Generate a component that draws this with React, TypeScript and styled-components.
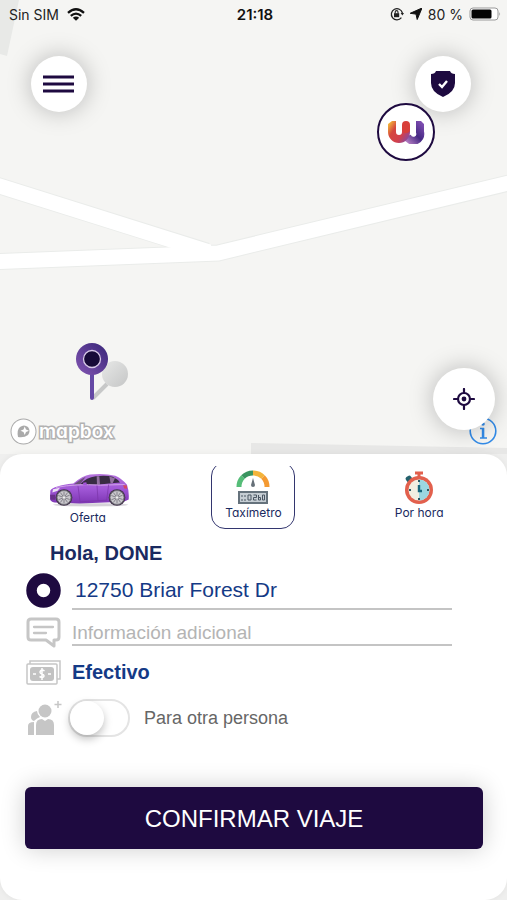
import React, { useState } from "react";
import styled, { createGlobalStyle } from "styled-components";

const ink = "#1e0a40";
const navy = "#1a2a60";
const blue = "#143a86";
const line = "#c4c4c4";

const GlobalStyle = createGlobalStyle`
  *, *::before, *::after { box-sizing: border-box; }
  body { margin: 0; background: #efefee; font-family: "Liberation Sans", Arial, sans-serif; }
  button, input { font: inherit; }
  svg { display: block; }
`;

const Screen = styled.div`
  display: flex;
  flex-direction: column;
  min-height: 100vh;
`;

const MapArea = styled.main`
  position: relative;
  display: flex;
  flex: 1;
  flex-direction: column;
  min-height: 454px;
  background: #f5f5f3;
`;

const MapDrawing = styled.svg`
  position: absolute;
  inset: 0;
  width: 100%;
  height: 100%;
`;

const StatusBar = styled.header`
  position: relative;
  display: grid;
  grid-template-columns: 1fr auto 1fr;
  align-items: center;
  height: 28px;
  padding: 0 6px 0 9px;
  color: #222;
  font-family: Inter, sans-serif;
  font-size: 14px;
`;

const StatusGroup = styled.div<{ $end?: boolean }>`
  display: flex;
  align-items: center;
  justify-content: ${(p) => (p.$end ? "flex-end" : "flex-start")};
  gap: ${(p) => (p.$end ? "6px" : "8px")};
`;

const Clock = styled.time`
  color: #111;
  font-size: 15px;
  font-weight: 600;
`;

const MapControls = styled.div`
  position: relative;
  display: flex;
  justify-content: space-between;
  padding: 28px 36px 0 31px;
`;

const RoundButton = styled.button<{ $large?: boolean }>`
  display: grid;
  place-items: center;
  width: ${(p) => (p.$large ? 62 : 56)}px;
  height: ${(p) => (p.$large ? 62 : 56)}px;
  padding: 0;
  border: 0;
  border-radius: 50%;
  background: #fff;
  box-shadow: 0 0 24px rgba(0, 0, 0, 0.25);
`;

const BrandMarker = styled.div`
  position: absolute;
  top: 103px;
  right: 72px;
  display: grid;
  place-items: center;
  width: 58px;
  height: 58px;
  border: 2px solid ${ink};
  border-radius: 50%;
  background: #fff;
`;

const PinMarker = styled.svg`
  position: absolute;
  left: 75px;
  bottom: 52px;
`;

const MapFooter = styled.div`
  position: relative;
  display: flex;
  align-items: flex-end;
  justify-content: space-between;
  margin-top: auto;
  padding: 0 10px 9px;
`;

const MapboxLink = styled.a`
  display: flex;
  align-items: center;
  gap: 2px;
  color: #fff;
  font-family: Inter, sans-serif;
  font-feature-settings: "cv11";
  font-size: 19px;
  font-weight: 600;
  line-height: 26px;
  text-decoration: none;
  -webkit-text-stroke: 3px #b2b2b2;
  paint-order: stroke fill;
`;

const Locator = styled.div`
  position: relative;
  display: flex;
`;

const InfoButton = styled.button`
  padding: 0;
  border: 0;
  background: none;
`;

const LocateSlot = styled.div`
  position: absolute;
  right: 2px;
  bottom: 15px;
`;

const Panel = styled.section`
  position: relative;
  padding: 12px 0 51px;
  border-radius: 22px;
  background: #fff;
  box-shadow: 0 0 6px rgba(0, 0, 0, 0.06);
`;

const Tabs = styled.div`
  display: grid;
  grid-template-columns: repeat(3, 1fr);
  justify-items: center;
  overflow: hidden;
  height: 63px;
  padding: 0 5px;
`;

const Tab = styled.button<{ $selected: boolean }>`
  position: relative;
  display: flex;
  flex-direction: column;
  align-items: center;
  width: 84px;
  height: 63px;
  padding: 4px 0 0;
  border: 0;
  background: none;
  color: ${navy};
  font-family: Inter, sans-serif;
  font-feature-settings: "cv11";
  font-size: 12px;
  line-height: 16px;

  &::before {
    content: "";
    position: absolute;
    inset: -4px 0 0;
    border: 1px solid ${(p) => (p.$selected ? "#33366f" : "transparent")};
    border-radius: 14px;
  }
`;

const TabPicture = styled.span<{ $tall?: boolean }>`
  display: grid;
  flex: none;
  place-items: center;
  height: ${(p) => (p.$tall ? 40 : 35)}px;
`;

const Form = styled.form`
  display: flex;
  flex-direction: column;
`;

const Greeting = styled.h1`
  margin: 12px 0 2px 50px;
  color: ${navy};
  font-size: 20px;
  line-height: 24px;
`;

const Row = styled.div<{ $height: number }>`
  display: grid;
  grid-template-columns: 36px 1fr;
  align-items: center;
  column-gap: 10px;
  height: ${(p) => p.$height}px;
  padding: 0 55px 0 26px;
`;

const TextField = styled.input<{ $strong?: boolean }>`
  width: 100%;
  height: ${(p) => (p.$strong ? 40 : 28)}px;
  padding: ${(p) => (p.$strong ? "2px 0 0 3px" : "4px 0 0")};
  border: 0;
  border-bottom: 2px solid ${line};
  outline: 0;
  background: none;
  color: ${blue};
  font-size: ${(p) => (p.$strong ? 21 : 19)}px;

  &::placeholder { color: #b4b4b4; }
`;

const PaymentButton = styled.button`
  justify-self: start;
  padding: 0;
  border: 0;
  background: none;
  color: ${blue};
  font-size: 20px;
  font-weight: 700;
`;

const SwitchLabel = styled.label`
  display: flex;
  align-items: center;
  gap: 14px;
  margin-left: -4px;
  color: #666;
  font-size: 18px;
`;

const Switch = styled.input`
  position: relative;
  width: 62px;
  height: 38px;
  margin: 0;
  border: 2px solid #e4e4e4;
  border-radius: 19px;
  appearance: none;
  background: #fff;

  &::before {
    content: "";
    position: absolute;
    top: 0;
    left: 0;
    width: 34px;
    height: 34px;
    border-radius: 50%;
    background: #fff;
    box-shadow: 0 4px 8px rgba(0, 0, 0, 0.25);
  }

  &:checked { background: ${ink}; }
  &:checked::before { left: 24px; }
`;

const ConfirmButton = styled.button`
  height: 62px;
  margin: 44px 24px 0 25px;
  padding: 2px 0 0;
  border: 0;
  border-radius: 6px;
  background: ${ink};
  box-shadow: 0 0 24px rgba(0, 0, 0, 0.2);
  color: #fff;
  font-size: 24px;
`;

const Streets = () => (
  <MapDrawing viewBox="0 0 507 454" preserveAspectRatio="xMidYMid slice" aria-hidden="true">
    <path d="M0 0H19L7 56L0 54Z" fill="#e8e9e7" />
    <path d="M251 443L507 448V454H251Z" fill="#e7e7e6" />
    <g fill="none" strokeLinejoin="miter">
      <g stroke="#eaecea" strokeWidth="17">
        <path d="M-10 183L207 251" />
        <path d="M-10 262L218 253L517 181" />
      </g>
      <g stroke="#fff" strokeWidth="15">
        <path d="M-10 183L209 252" />
        <path d="M-10 262L218 253L517 181" />
      </g>
    </g>
  </MapDrawing>
);

const WifiIcon = () => (
  <svg width="18" height="13" viewBox="0 0 18 13" fill="none" stroke="#111" strokeWidth="2.3" aria-hidden="true">
    <path d="M1 4.8Q9-2.2 17 4.8" />
    <path d="M3.8 7.8Q9 3.4 14.2 7.8" />
    <path d="M9 12.8L5.8 9.7Q9 7.2 12.2 9.7Z" fill="#111" stroke="none" />
  </svg>
);

const LockIcon = () => (
  <svg width="14" height="14" viewBox="0 0 14 14" fill="none" stroke="#222" aria-hidden="true">
    <path d="M11.4 10.7A5.6 5.6 0 1 1 12.4 6" strokeWidth="1.3" />
    <path d="M10.6 6H14L12.4 8.6Z" fill="#222" stroke="none" />
    <rect x="4" y="6.2" width="5.2" height="4" fill="#222" stroke="none" />
    <path d="M5.2 6.5V5A1.4 1.4 0 0 1 8 5V6.5" strokeWidth="1.1" />
  </svg>
);

const ArrowIcon = () => (
  <svg width="12" height="12" viewBox="0 0 12 12" fill="#111" aria-hidden="true">
    <path d="M12 0L7.2 11.5L6 6.1L.2 5.3Z" stroke="#111" strokeLinejoin="round" />
  </svg>
);

const BatteryIcon = () => (
  <svg width="32" height="14" viewBox="0 0 32 14" aria-hidden="true">
    <rect x="1" y="1" width="28" height="12" rx="3" fill="#fff" stroke="#999" />
    <rect x="2.5" y="2.5" width="20" height="9" rx="1.5" fill="#050505" />
    <path d="M30.3 5Q32 7 30.3 9Z" fill="#999" />
  </svg>
);

const MenuIcon = () => (
  <svg width="32" height="20" viewBox="0 0 32 20" stroke={ink} strokeWidth="3" aria-hidden="true">
    <path d="M0 3H31M0 10H31M0 17H31" />
  </svg>
);

const ShieldIcon = () => (
  <svg width="26" height="28" viewBox="0 0 26 28" aria-hidden="true">
    <path d="M6 1H20Q21 4 25 4V13Q25 22 13 27Q1 22 1 13V4Q5 4 6 1Z" fill={ink} />
    <path d="M9 14L12 17L17 11" fill="none" stroke="#fff" strokeWidth="2.4" />
  </svg>
);

const BrandIcon = () => (
  <svg width="38" height="24" viewBox="0 0 38 24" fill="none" strokeWidth="8" aria-hidden="true">
    <defs>
      <linearGradient id="brandWarm" gradientUnits="userSpaceOnUse" x1="1" y1="4" x2="23" y2="19">
        <stop offset="0" stopColor="#f5bc3a" />
        <stop offset=".3" stopColor="#d5473e" />
        <stop offset=".65" stopColor="#d2404c" />
        <stop offset="1" stopColor="#7d4aac" />
      </linearGradient>
      <linearGradient id="brandCool" gradientUnits="userSpaceOnUse" x1="18" y1="20" x2="36" y2="2">
        <stop offset="0" stopColor="#b07bc0" />
        <stop offset=".45" stopColor="#452883" />
        <stop offset="1" stopColor="#8552b6" />
      </linearGradient>
    </defs>
    <path d="M33 1V12A6.500 6.500 0 0 1 20 16" stroke="url(#brandCool)" />
    <path d="M5 1V12A7 7 0 0 0 19 12V5" stroke="url(#brandWarm)" />
    <path d="M19 9V4.9" stroke="#d83f3a" strokeLinecap="round" />
    <path d="M1 1H5L1 4ZM37 1H34L37 4Z" fill="#fff" stroke="none" />
  </svg>
);

const LocationPin = () => (
  <PinMarker width="56" height="60" viewBox="0 0 56 60" aria-hidden="true">
    <defs>
      <linearGradient id="pinFill" x1="0" y1="1" x2="1" y2="0">
        <stop stopColor="#8356b3" />
        <stop offset="1" stopColor="#382578" />
      </linearGradient>
      <linearGradient id="pinShade" x1="0" y1="0" x2="1" y2="1">
        <stop stopColor="#e7e8e7" />
        <stop offset="1" stopColor="#c5c6c6" />
      </linearGradient>
    </defs>
    <path d="M18 56L32 42" stroke="#c7c8c8" strokeWidth="4" />
    <circle cx="40" cy="32" r="13" fill="url(#pinShade)" />
    <path d="M17 30V56" stroke="#6549a5" strokeWidth="4" strokeLinecap="round" />
    <circle cx="17" cy="17" r="16" fill="url(#pinFill)" />
    <circle cx="17" cy="17" r="8.5" fill="#170a38" stroke="#d8c9e8" strokeWidth="1.3" />
  </PinMarker>
);

const MapboxIcon = () => (
  <svg width="27" height="27" viewBox="0 0 27 27" aria-hidden="true">
    <circle cx="13.5" cy="13.5" r="12" fill="#fff" stroke="#a9a9a9" strokeWidth="2" />
    <path d="M8 19Q6.5 12 10 9Q14 6 18 9Q21 13 18 17Q14 20 8 19Z" fill="#aaa" />
    <path d="M14.7 8.5L16 11.5L19 12.8L16 14L14.7 17L13.5 14L10.5 12.8L13.5 11.5Z" fill="#fff" />
  </svg>
);

const InfoIcon = () => (
  <svg width="28" height="28" viewBox="0 0 28 28" fill="none" stroke="#328be8" aria-hidden="true">
    <circle cx="14" cy="14" r="12.8" strokeWidth="1.6" />
    <circle cx="14" cy="7" r="1.8" fill="#328be8" stroke="none" />
    <path d="M11 11.5H14.5V21M11 21H18" strokeWidth="1.3" />
    <path d="M14 11V21" strokeWidth="2.4" />
  </svg>
);

const LocateIcon = () => (
  <svg width="22" height="22" viewBox="0 0 22 22" fill="none" stroke={ink} strokeWidth="2.2" strokeLinecap="round" aria-hidden="true">
    <circle cx="11" cy="11" r="6" />
    <circle cx="11" cy="11" r="2.4" fill={ink} stroke="none" />
    <path d="M11 1V5M11 17V21M1 11H5M17 11H21" />
  </svg>
);

const Wheel = ({ x }: { x: number }) => (
  <g transform={`translate(${x} 133)`}>
    <circle r="25" fill="#403149" />
    <circle r="21" fill="#c9c7cc" stroke="#717078" strokeWidth="3" />
    <path d="M0-18V18M-17-6L17 6M-11 15L11-15M-17 7L17-7M-11-15L11 15" stroke="#85838b" strokeWidth="3" />
    <circle r="4" fill="#eee" />
  </g>
);

const CarIcon = () => (
  <svg width="82" height="35" viewBox="52 60 246 104" aria-hidden="true">
    <defs>
      <linearGradient id="carPaint" x1="0" y1="0" x2="0" y2="1">
        <stop stopColor="#b574dc" />
        <stop offset=".5" stopColor="#a158d7" />
        <stop offset="1" stopColor="#7d35b3" />
      </linearGradient>
    </defs>
    <ellipse cx="183" cy="155" rx="113" ry="5" fill="#d5d2d8" />
    <path d="M62 112Q71 98 131 91Q159 67 181 64Q223 59 257 68Q276 76 292 95Q299 115 297 139L282 146L150 151L75 148Q61 145 61 136Z" fill="url(#carPaint)" />
    <path d="M153 92Q170 73 198 69Q229 65 249 71Q265 79 271 88L238 91Q195 97 157 94Z" fill="#382c43" />
    <path d="M201 69H209L211 94L202 95ZM239 70L256 75L249 90L243 91Z" fill="#92719f" />
    <path d="M132 94Q149 81 168 71L151 94Z" fill="#6b5178" />
    <path d="M79 103Q139 91 213 96L285 94" fill="none" stroke="#d0a1e9" strokeWidth="3" />
    <path d="M145 99L151 146L231 141L237 94M202 97L205 142" fill="none" stroke="#7933a6" strokeWidth="2" />
    <path d="M70 108L91 104L84 113L68 118Z" fill="#eee2f5" />
    <path d="M61 125H77V140H63Z" fill="#69318a" />
    <path d="M280 96L292 97V107L284 106Z" fill="#d44863" />
    <path d="M160 89L170 87L172 96L161 96Z" fill="#a354d7" />
    <Wheel x={103} />
    <Wheel x={262} />
  </svg>
);

const MeterIcon = () => (
  <svg width="34" height="35" viewBox="0 0 34 35" aria-hidden="true">
    <g fill="none" strokeWidth="5">
      <path d="M3 17A14 14 0 0 1 7 7" stroke="#55bd78" />
      <path d="M7 7A14 14 0 0 1 17 3" stroke="#3a9460" />
      <path d="M17 3A14 14 0 0 1 27 7" stroke="#f3b43b" />
      <path d="M27 7A14 14 0 0 1 31 17" stroke="#f49a32" />
    </g>
    <path d="M17 8L19 15A2 2 0 0 1 15 15Z" fill="#667078" />
    <rect x="2" y="21" width="30" height="13" fill="#65727c" />
    <rect x="4" y="23" width="26" height="9" fill="#c6ced4" />
    <g fill="none" stroke="#4a5663">
      <path d="M6 25V27M6 29V31M9 25V27M9 29V31" />
      <path d="M12 25H15V30H12Z" />
      <path d="M17.500 25H20.500V27.500H17.500V30H20.500" />
      <path d="M22.500 25V30H24.500V27.500H22.500M26.500 25H28.500V30H26.500Z" />
    </g>
  </svg>
);

const StopwatchIcon = () => (
  <svg width="30" height="34" viewBox="0 0 30 34" aria-hidden="true">
    <path d="M11 2H19M15 2V6" stroke="#e2604d" strokeWidth="3" />
    <rect x="2" y="5" width="6" height="6" rx="2" fill="#24616d" transform="rotate(-35 5 8)" />
    <circle cx="15" cy="19" r="14" fill="#e2604d" />
    <circle cx="15" cy="19" r="10.5" fill="#f1eee2" />
    <path d="M15 8.500A10.500 10.500 0 0 1 15 29.500Z" fill="#9bd7e2" />
    <path d="M15 9V11M15 27V29M5 19H7M23 19H25" stroke="#2b5965" strokeWidth="2" />
    <path d="M15 14V20H18" fill="none" stroke="#17687d" strokeWidth="2.4" />
  </svg>
);

const OriginIcon = () => (
  <svg width="35" height="35" viewBox="0 0 35 35" aria-hidden="true">
    <circle cx="17.500" cy="17.500" r="12" fill="#fff" stroke={ink} strokeWidth="10.500" />
  </svg>
);

const NoteIcon = () => (
  <svg width="36" height="32" viewBox="0 0 36 32" fill="none" stroke="#c6c6c6" strokeWidth="3" strokeLinejoin="round" strokeLinecap="round" aria-hidden="true">
    <path d="M5 3H30Q33 3 33 6V21Q33 24 30 24H28V30L20 24H5Q2 24 2 21V6Q2 3 5 3Z" />
    <path d="M8 11H27M8 17H20" strokeWidth="2.300" />
  </svg>
);

const CashIcon = () => (
  <svg width="36" height="25" viewBox="0 0 36 25" fill="none" stroke="#c6c6c6" aria-hidden="true">
    <path d="M4 4V1H34V19H31" strokeWidth="1.500" />
    <rect x="1" y="4" width="30" height="20" rx="1" fill="#fff" strokeWidth="1.500" />
    <rect x="4" y="7" width="24" height="14" rx="3" fill="#c2c2c2" stroke="none" />
    <path d="M18.500 11Q16 9 14.500 11Q13 13 16 14Q19 15 17.500 17Q16 18 13.500 16.500M16 8V20M7 14H10M22 14H25" stroke="#fff" strokeWidth="1.500" />
  </svg>
);

const PeopleIcon = () => (
  <svg width="36" height="36" viewBox="0 0 36 36" fill="#c6c6c6" aria-hidden="true">
    <circle cx="19" cy="11" r="6.500" />
    <path d="M10 35V25Q10 19 16 19L19 21L22 19Q28 19 28 25V35Z" />
    <path d="M11 11Q5 12 5 17Q5 20 8 21Q11 18 14 17Q11 14 11 11Z" />
    <path d="M2 35V26Q2 22 8 22V35Z" />
    <path d="M32 1V8M28.500 4.500H35.500" stroke="#c6c6c6" strokeWidth="1.500" />
  </svg>
);

const services = [
  { id: "oferta", name: "Oferta", icon: <CarIcon />, tall: true },
  { id: "taximetro", name: "Taxímetro", icon: <MeterIcon />, tall: false },
  { id: "hora", name: "Por hora", icon: <StopwatchIcon />, tall: false },
];

export default function App() {
  const [service, setService] = useState("taximetro");
  const [address, setAddress] = useState("12750 Briar Forest Dr");

  return (
    <>
      <GlobalStyle />
      <Screen>
        <MapArea>
          <Streets />
          <StatusBar>
            <StatusGroup>
              <span>Sin SIM</span>
              <WifiIcon />
            </StatusGroup>
            <Clock>21:18</Clock>
            <StatusGroup $end>
              <LockIcon />
              <ArrowIcon />
              <span>80 %</span>
              <BatteryIcon />
            </StatusGroup>
          </StatusBar>
          <MapControls>
            <RoundButton aria-label="Menú"><MenuIcon /></RoundButton>
            <RoundButton aria-label="Seguridad"><ShieldIcon /></RoundButton>
          </MapControls>
          <BrandMarker><BrandIcon /></BrandMarker>
          <LocationPin />
          <MapFooter>
            <MapboxLink href="#mapbox"><MapboxIcon />mapbox</MapboxLink>
            <Locator>
              <InfoButton aria-label="Información del mapa"><InfoIcon /></InfoButton>
              <LocateSlot>
                <RoundButton $large aria-label="Mi ubicación"><LocateIcon /></RoundButton>
              </LocateSlot>
            </Locator>
          </MapFooter>
        </MapArea>
        <Panel>
          <Tabs role="tablist">
            {services.map((s) => (
              <Tab
                key={s.id}
                type="button"
                role="tab"
                aria-selected={service === s.id}
                $selected={service === s.id}
                onClick={() => setService(s.id)}
              >
                <TabPicture $tall={s.tall}>{s.icon}</TabPicture>
                {s.name}
              </Tab>
            ))}
          </Tabs>
          <Form onSubmit={(e) => e.preventDefault()}>
            <Greeting>Hola, DONE</Greeting>
            <Row $height={46}>
              <OriginIcon />
              <TextField
                $strong
                aria-label="Dirección de origen"
                value={address}
                onChange={(e) => setAddress(e.target.value)}
              />
            </Row>
            <Row $height={38}>
              <NoteIcon />
              <TextField aria-label="Información adicional" placeholder="Información adicional" />
            </Row>
            <Row $height={42}>
              <CashIcon />
              <PaymentButton type="button">Efectivo</PaymentButton>
            </Row>
            <Row $height={50}>
              <PeopleIcon />
              <SwitchLabel>
                <Switch type="checkbox" role="switch" />
                Para otra persona
              </SwitchLabel>
            </Row>
            <ConfirmButton type="submit">CONFIRMAR VIAJE</ConfirmButton>
          </Form>
        </Panel>
      </Screen>
    </>
  );
}
